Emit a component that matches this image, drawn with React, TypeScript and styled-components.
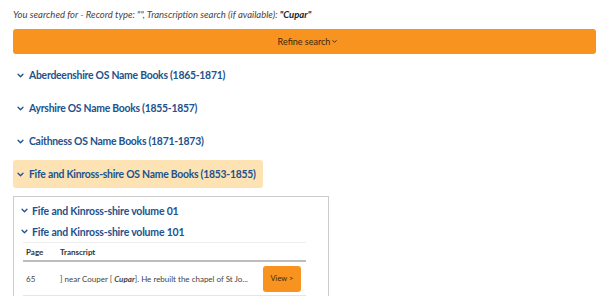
import React from "react";
import styled, { createGlobalStyle } from "styled-components";

const Global = createGlobalStyle`
  html, body { margin: 0; padding: 0; background: #fff; }
  body { font-family: "Lato", "Noto Sans", sans-serif; }
`;

const Page = styled.div`
  padding: 7px 6px 0 13px;
  display: flex;
  flex-direction: column;
`;

const Summary = styled.p`
  margin: 0;
  height: 15px;
  line-height: 15px;
  font-size: 9.5px;
  font-style: italic;
  color: #444;
  b { color: #222; }
`;

const RefineBar = styled.button`
  margin-top: 7px;
  height: 25px;
  border: none;
  border-radius: 3px;
  background: #f7931e;
  color: #3a2a10;
  font-family: inherit;
  font-size: 9px;
  display: flex;
  align-items: center;
  justify-content: center;
  gap: 2px;
  padding: 0 0 0 6px;
`;

const List = styled.div`
  margin-top: 7px;
  display: flex;
  flex-direction: column;
  gap: 5px;
`;

const Heading = styled.div<{ $active?: boolean }>`
  align-self: flex-start;
  height: 28px;
  display: flex;
  align-items: center;
  gap: 5px;
  padding: 0 7px 0 4px;
  border-radius: 3px;
  background: ${(p) => (p.$active ? "#fde2b4" : "transparent")};
  color: #22528d;
  font-weight: 700;
  font-size: 10.4px;
  letter-spacing: -0.25px;
`;

const Chevron = ({ size = 7 }: { size?: number }) => (
  <svg width={size} height={size} viewBox="0 0 10 10">
    <path d="M1.5 3.2 L5 6.7 L8.5 3.2" fill="none" stroke="currentColor" strokeWidth="1.9" strokeLinecap="round" strokeLinejoin="round" />
  </svg>
);

const Panel = styled.div`
  margin-top: 8px;
  border: 1px solid #ccc;
  border-bottom: none;
  padding: 3px 0 0 7px;
  box-sizing: border-box;
  width: 316px;
`;

const SubHeading = styled.div`
  height: 21px;
  display: flex;
  align-items: center;
  gap: 4px;
  color: #22528d;
  font-weight: 700;
  font-size: 10.5px;
  letter-spacing: -0.2px;
`;

const Table = styled.table`
  margin-left: 2px;
  width: 283px;
  border-collapse: collapse;
  font-size: 8px;
  color: #444;
`;

const Th = styled.th<{ $w?: number }>`
  text-align: left;
  font-weight: 700;
  color: #333;
  height: 17px;
  padding: 0 3px;
  width: ${(p) => (p.$w ? `${p.$w}px` : "auto")};
  border-top: 1px solid #eee;
  border-bottom: 2px solid #bdbdbd;
`;

const Td = styled.td`
  height: 33px;
  padding: 0 3px;
  border-bottom: 1px solid #e6e6e6;
  white-space: nowrap;
  vertical-align: middle;
`;

const ViewButton = styled.button`
  display: block;
  width: 38px;
  height: 26px;
  border: none;
  border-radius: 3px;
  background: #f7931e;
  color: #3a2a10;
  font-family: inherit;
  font-size: 7.5px;
`;

export default function App() {
  return (
    <>
      <Global />
      <Page>
        <Summary>
          You searched for - Record type: "", Transcription search (if available): <b>"Cupar"</b>
        </Summary>
        <RefineBar>
          Refine search <Chevron size={5} />
        </RefineBar>
        <List>
          <Heading><Chevron /> Aberdeenshire OS Name Books (1865-1871)</Heading>
          <Heading><Chevron /> Ayrshire OS Name Books (1855-1857)</Heading>
          <Heading><Chevron /> Caithness OS Name Books (1871-1873)</Heading>
          <Heading $active><Chevron /> Fife and Kinross-shire OS Name Books (1853-1855)</Heading>
        </List>
        <Panel>
          <SubHeading><Chevron /> Fife and Kinross-shire volume 01</SubHeading>
          <SubHeading><Chevron /> Fife and Kinross-shire volume 101</SubHeading>
          <Table>
            <thead>
              <tr>
                <Th $w={28}>Page</Th>
                <Th>Transcript</Th>
                <Th />
              </tr>
            </thead>
            <tbody>
              <tr>
                <Td>65</Td>
                <Td>] near Couper [ <b><i>Cupar</i></b>]. He rebuilt the chapel of St Jo...</Td>
                <Td><ViewButton>View &gt;</ViewButton></Td>
              </tr>
            </tbody>
          </Table>
        </Panel>
      </Page>
    </>
  );
}
